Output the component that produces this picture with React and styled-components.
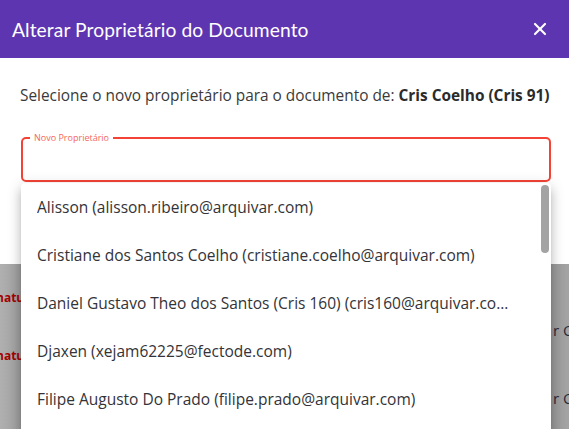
import React from 'react'
import styled, { createGlobalStyle } from 'styled-components'
import { X } from 'lucide-react'

const GlobalStyle = createGlobalStyle`
    html, body {
        margin: 0;
        padding: 0;
        overflow: hidden;
        background: #a7a7a7;
    }
    * {
        box-sizing: border-box;
    }
`

const font = `"Open Sans", Lato, "Liberation Sans", sans-serif`

const Screen = styled.div`
    position: relative;
    width: 569px;
    height: 429px;
    overflow: hidden;
    font-family: ${font};
    background: linear-gradient(90deg, #b0b0b0 0%, #9e9e9e 4%, #a9a9a9 50%, #9a9a9a 97%, #a4a4a4 100%);
`

const Dialog = styled.div`
    background: #ffffff;
    height: 264px;
    display: flex;
    flex-direction: column;
`

const Header = styled.div`
    height: 58px;
    background: #5e35b1;
    color: #ffffff;
    display: flex;
    align-items: center;
    justify-content: space-between;
    padding: 0 19px 0 12px;
`

const Title = styled.h2`
    margin: 0;
    font-family: Lato, "Open Sans", sans-serif;
    font-size: 19.2px;
    font-weight: 400;
    letter-spacing: 0.1px;
`

const CloseButton = styled.button`
    border: 0;
    background: none;
    color: #ffffff;
    padding: 0;
    display: flex;
    cursor: pointer;
`

const Body = styled.div`
    padding: 28px 18px 0 20px;
`

const Description = styled.p`
    margin: 0;
    font-size: 15.4px;
    line-height: 20px;
    color: #3a3a3a;
    white-space: nowrap;
    b {
        color: #2b2b2b;
        font-weight: 700;
    }
`

const Field = styled.fieldset`
    margin: 27px 0 0 1px;
    width: 530px;
    height: 49px;
    border: 2px solid #f44336;
    border-radius: 5px;
    padding: 0 7px;
`

const Legend = styled.legend`
    font-size: 9px;
    color: #f4675c;
    padding: 0 4px;
    line-height: 9px;
`

const BackRows = styled.div`
    flex: 1;
    display: flex;
    justify-content: space-between;
`

const BackColumn = styled.div`
    display: flex;
    flex-direction: column;
    gap: ${({ $gap }) => $gap}px;
    padding-top: ${({ $top }) => $top}px;
`

const BackLabel = styled.span`
    font-size: 12px;
    font-weight: 700;
    color: #a50000;
    margin-left: -4px;
    white-space: nowrap;
`

const BackText = styled.span`
    font-size: 15px;
    color: #262a3a;
    white-space: nowrap;
    width: 16px;
    overflow: hidden;
`

const Dropdown = styled.div`
    position: absolute;
    top: 183px;
    left: 21px;
    width: 530px;
    height: 260px;
    background: #ffffff;
    border-radius: 4px;
    box-shadow: 0px 5px 5px -3px rgba(0, 0, 0, 0.2), 0px 8px 10px 1px rgba(0, 0, 0, 0.14), 0px 3px 14px 2px rgba(0, 0, 0, 0.12);
`

const Options = styled.ul`
    list-style: none;
    margin: 0;
    padding: 0;
`

const Option = styled.li`
    height: 48px;
    display: flex;
    align-items: center;
    padding: 0 39px 0 16px;
    font-size: 15.5px;
    color: #333338;
    span {
        overflow: hidden;
        text-overflow: ellipsis;
        white-space: nowrap;
    }
`

const Thumb = styled.div`
    position: absolute;
    top: 2px;
    right: 2px;
    width: 8px;
    height: 68px;
    border-radius: 4px;
    background: #a3a3a3;
`

const users = [
    'Alisson (alisson.ribeiro@arquivar.com)',
    'Cristiane dos Santos Coelho (cristiane.coelho@arquivar.com)',
    'Daniel Gustavo Theo dos Santos (Cris 160) (cris160@arquivar.com)',
    'Djaxen (xejam62225@fectode.com)',
    'Filipe Augusto Do Prado (filipe.prado@arquivar.com)',
]

export default function App() {
    return (
        <Screen>
            <GlobalStyle />
            <Dialog>
                <Header>
                    <Title>Alterar Proprietário do Documento</Title>
                    <CloseButton aria-label="Fechar">
                        <X size={20} strokeWidth={2.6} />
                    </CloseButton>
                </Header>
                <Body>
                    <Description>
                        Selecione o novo proprietário para o documento de: <b>Cris Coelho (Cris 91)</b>
                    </Description>
                    <Field>
                        <Legend>Novo Proprietário</Legend>
                    </Field>
                </Body>
            </Dialog>
            <BackRows>
                <BackColumn $top={25} $gap={41}>
                    <BackLabel>natura</BackLabel>
                    <BackLabel>natura</BackLabel>
                </BackColumn>
                <BackColumn $top={56} $gap={48}>
                    <BackText>r QR</BackText>
                    <BackText>r QR</BackText>
                </BackColumn>
            </BackRows>
            <Dropdown>
                <Options>
                    {users.map((u) => (
                        <Option key={u}>
                            <span>{u}</span>
                        </Option>
                    ))}
                </Options>
                <Thumb />
            </Dropdown>
        </Screen>
    )
}
